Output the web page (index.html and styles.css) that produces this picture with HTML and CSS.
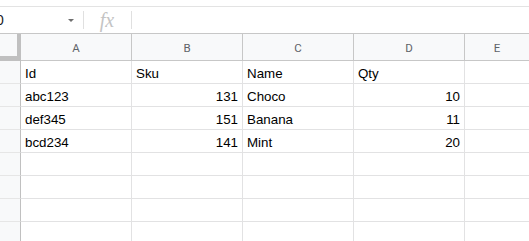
FILE: index.html
```html
<!DOCTYPE html>
<html>
<head>
<meta charset="utf-8">
<link rel="stylesheet" href="styles.css">
</head>
<body>
<div class="topgap"></div>
<div class="fbar">
  <div class="namebox"><span class="nametext">0</span><span class="caret"></span></div>
  <div class="sep"></div>
  <div class="fx">fx</div>
  <div class="sep"></div>
  <div class="finput"></div>
</div>
<div class="grid">
  <div class="corner"></div>
  <div class="ch">A</div><div class="ch">B</div><div class="ch">C</div><div class="ch">D</div><div class="ch last">E</div>

  <div class="rh"></div>
  <div class="c">Id</div><div class="c">Sku</div><div class="c">Name</div><div class="c">Qty</div><div class="c last"></div>

  <div class="rh"></div>
  <div class="c">abc123</div><div class="c num">131</div><div class="c">Choco</div><div class="c num">10</div><div class="c last"></div>

  <div class="rh"></div>
  <div class="c">def345</div><div class="c num">151</div><div class="c">Banana</div><div class="c num">11</div><div class="c last"></div>

  <div class="rh"></div>
  <div class="c">bcd234</div><div class="c num">141</div><div class="c">Mint</div><div class="c num">20</div><div class="c last"></div>

  <div class="rh"></div>
  <div class="c"></div><div class="c"></div><div class="c"></div><div class="c"></div><div class="c last"></div>

  <div class="rh"></div>
  <div class="c"></div><div class="c"></div><div class="c"></div><div class="c"></div><div class="c last"></div>

  <div class="rh"></div>
  <div class="c"></div><div class="c"></div><div class="c"></div><div class="c"></div><div class="c last"></div>

  <div class="rh"></div>
  <div class="c"></div><div class="c"></div><div class="c"></div><div class="c"></div><div class="c last"></div>
</div>
</body>
</html>
```
FILE: styles.css
```css
html, body {
  margin: 0;
  padding: 0;
  background: #ffffff;
  overflow: hidden;
  width: 529px;
  height: 241px;
}
body {
  font-family: "Liberation Sans", Arial, sans-serif;
}
.topgap {
  height: 6px;
  border-bottom: 1px solid #e3e3e3;
}
.fbar {
  height: 26px;
  display: flex;
  align-items: center;
  border-bottom: 1px solid #c7c7c7;
}
.namebox {
  width: 83px;
  height: 100%;
  display: flex;
  align-items: center;
  position: relative;
  overflow: hidden;
}
.nametext {
  font-size: 14px;
  color: #202124;
  margin-left: -4px;
}
.caret {
  position: absolute;
  left: 68px;
  top: 12px;
  width: 0;
  height: 0;
  border-left: 3px solid transparent;
  border-right: 3px solid transparent;
  border-top: 3px solid #6f6f6f;
}
.sep {
  width: 1px;
  height: 18px;
  background: #e0e0e0;
}
.fx {
  width: 47px;
  text-align: center;
  font-family: "Liberation Serif", "Times New Roman", serif;
  font-style: italic;
  font-size: 20px;
  color: #c4c4c4;
  line-height: 26px;
  padding-right: 1px;
  box-sizing: border-box;
}
.finput {
  flex: 1;
}
.grid {
  display: grid;
  grid-template-columns: 21px 111px 111px 111px 111px 1fr;
  grid-auto-rows: 23px;
  grid-template-rows: 27px;
}
.corner {
  background: #f8f9fa;
  border-right: 5px solid #c0c0c0;
  border-bottom: 5px solid #c0c0c0;
  box-sizing: border-box;
  margin-right: -1px;
}
.ch {
  background: #f8f9fa;
  border-right: 1px solid #c7c7c7;
  border-bottom: 1px solid #c7c7c7;
  box-sizing: border-box;
  display: flex;
  align-items: center;
  justify-content: center;
  font-family: Roboto, "Liberation Sans", sans-serif;
  font-size: 11.5px;
  color: #5f6368;
  padding-top: 2px;
}
.ch.last {
  border-right: none;
}
.rh {
  background: #f8f9fa;
  border-right: 1px solid #c0c0c0;
  border-bottom: 1px solid #e6e6e6;
  box-sizing: border-box;
}
.c {
  border-right: 1px solid #e2e2e3;
  border-bottom: 1px solid #e2e2e3;
  box-sizing: border-box;
  display: flex;
  align-items: flex-end;
  padding: 0 4px 2px 4px;
  font-size: 13.33px;
  line-height: 15px;
  color: #000000;
  white-space: nowrap;
  overflow: hidden;
}
.c.num {
  justify-content: flex-end;
}
.c.last {
  border-right: none;
}
```
